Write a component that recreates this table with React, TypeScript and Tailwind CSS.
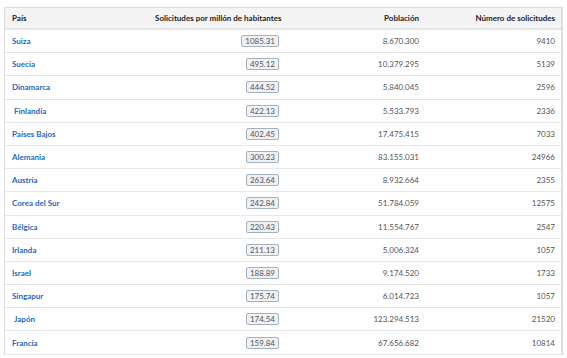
import React from 'react';

const rows: [string, string, string, string][] = [
  ['Suiza', '1085.31', '8.670.300', '9410'],
  ['Suecia', '495.12', '10.379.295', '5139'],
  ['Dinamarca', '444.52', '5.840.045', '2596'],
  [' Finlandia', '422.13', '5.533.793', '2336'],
  ['Países Bajos', '402.45', '17.475.415', '7033'],
  ['Alemania', '300.23', '83.155.031', '24966'],
  ['Austria', '263.64', '8.932.664', '2355'],
  ['Corea del Sur', '242.84', '51.784.059', '12575'],
  ['Bélgica', '220.43', '11.554.767', '2547'],
  ['Irlanda', '211.13', '5.006.324', '1057'],
  ['Israel', '188.89', '9.174.520', '1733'],
  ['Singapur', '175.74', '6.014.723', '1057'],
  [' Japón', '174.54', '123.294.513', '21520'],
  ['Francia', '159.84', '67.656.682', '10814'],
];

const grid = 'grid grid-cols-[150px_133px_137px_1fr] items-center';

export default function App() {
  return (
    <div className="w-[567px] h-[358px] bg-white overflow-hidden pt-[7px] pl-[4px] font-['Lato','Liberation_Sans',sans-serif] text-[8px]">
      <div className="w-[559px] border-l border-r-2 border-[#dcdcdc] border-t">
        {/* header */}
        <div className={`${grid} h-[22px] bg-[#f4f4f4] border-b-2 border-[#e6e6e6] font-bold text-[#222]`}>
          <div className="pl-[7px]">País</div>
          <div className="text-right pr-[7px] whitespace-nowrap">Solicitudes por millón de habitantes</div>
          <div className="text-right pr-[6px]">Población</div>
          <div className="text-right pr-[6px]">Número de solicitudes</div>
        </div>

        {rows.map(([pais, ratio, pop, num]) => (
          <div
            key={pais}
            className={`${grid} h-[23.2px] border-b border-[#e8e8e8]`}
          >
            <div className={`pl-[7px] font-bold text-[#2469c0] ${pais.startsWith(' ') ? 'ml-[2px]' : ''}`}>
              {pais.trim()}
            </div>
            <div className="flex justify-end pr-[9px]">
              <span className="px-[3px] leading-[10px] rounded-[2px] border border-[#a3b0be] bg-[#eef1f5] text-[#555]">
                {ratio}
              </span>
            </div>
            <div className="text-right pr-[6px] text-[#555]">{pop}</div>
            <div className="text-right pr-[6px] text-[#555]">{num}</div>
          </div>
        ))}
      </div>
    </div>
  );
}
